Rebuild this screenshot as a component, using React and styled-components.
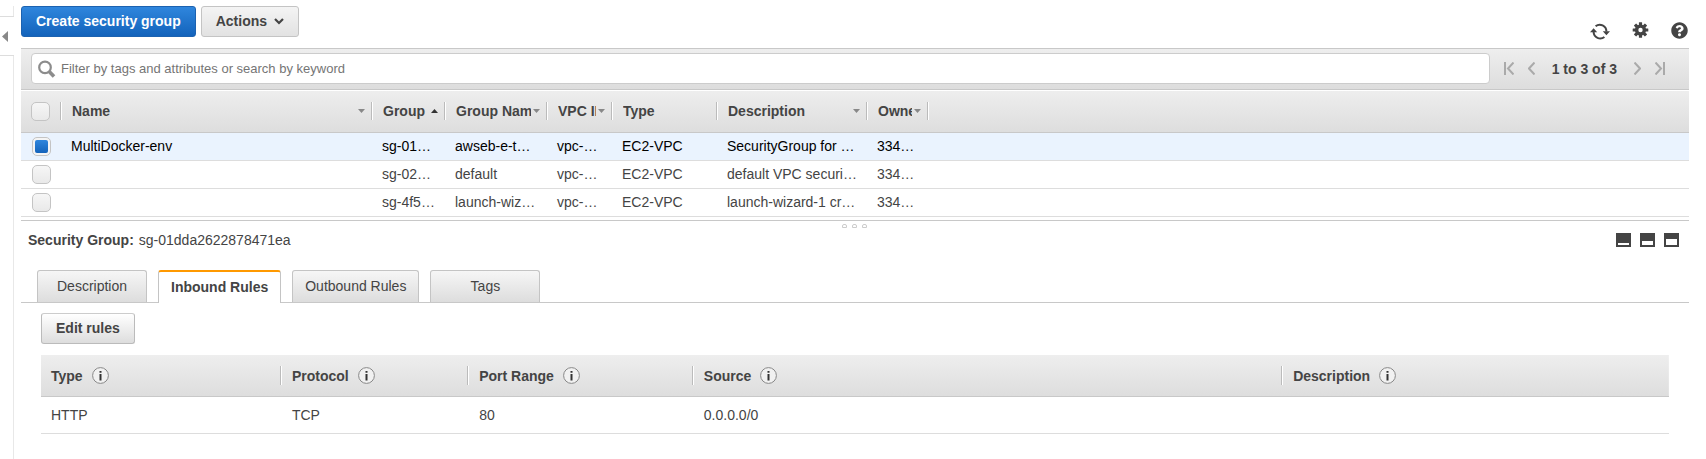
import React, { useState } from 'react';
import styled, { createGlobalStyle, css } from 'styled-components';
import { FaQuestionCircle } from 'react-icons/fa';

const GlobalStyle = createGlobalStyle`
  *, *::before, *::after { box-sizing: border-box; }
  body {
    margin: 0;
    background: #fff;
    color: #444;
    font: 14px/16px "Liberation Sans", Arial, sans-serif;
  }
  button, input { font: inherit; color: inherit; margin: 0; }
  svg { display: block; flex: none; }
`;

const Page = styled.div`
  display: flex;
  gap: 7px;
  min-height: 100vh;
  padding-right: 17px;
`;

const Rail = styled.aside`
  display: flex;
  flex-direction: column;
  flex: none;
  width: 14px;
  padding-top: 6px;
`;

const RailEdge = styled.div`
  border-right: 1px solid #e8e8e8;
  ${({ $grow }) => ($grow ? 'flex: 1;' : 'height: 10px;')}
`;

const RailToggle = styled.button`
  display: flex;
  align-items: center;
  height: 40px;
  padding: 0 0 0 2px;
  border: solid #ddd;
  border-width: 1px 0;
  background: #fff;
  cursor: pointer;
`;

const Main = styled.main`
  flex: 1;
  min-width: 0;
`;

const Toolbar = styled.div`
  display: flex;
  gap: 5px;
  padding: 6px 0 8px;
`;

const Button = styled.button`
  display: inline-flex;
  align-items: center;
  gap: 7px;
  height: 31px;
  padding: 0 14px 1px;
  border: 1px solid #bbb;
  border-top-color: #ccc;
  border-radius: 3px;
  background: linear-gradient(#fff, #ddd);
  font-weight: bold;
  white-space: nowrap;
  cursor: pointer;
  ${({ $kind }) => $kind === 'primary' && css`
    border-color: #1c62b0;
    background: linear-gradient(#2f86dd, #1363bb);
    color: #fff;
  `}
  ${({ $kind }) => $kind === 'menu' && css`
    border-color: #c4c4c4;
    background: linear-gradient(#f4f4f4, #e2e2e2);
  `}
`;

const ToolIcons = styled.div`
  display: flex;
  align-items: flex-start;
  align-self: flex-end;
  gap: 22px;
  height: 18px;
  margin: 16px 0 0 auto;
  padding-right: 1px;
`;

const IconButton = styled.button`
  display: flex;
  padding: 0;
  border: 0;
  background: none;
  cursor: pointer;
`;

const FilterBar = styled.div`
  display: flex;
  align-items: center;
  gap: 14px;
  padding: 4px 24px 5px 10px;
  border: solid #c8c8c8;
  border-width: 1px 0;
  background: linear-gradient(#eee, #ddd);
`;

const SearchBox = styled.label`
  display: flex;
  align-items: center;
  flex: 1;
  gap: 5px;
  height: 31px;
  padding: 0 6px;
  border: 1px solid #ccc;
  border-radius: 4px;
  background: #fff;
`;

const SearchInput = styled.input`
  flex: 1;
  min-width: 0;
  padding: 0;
  border: 0;
  outline: 0;
  background: none;
  font-size: 13px;
  &::placeholder { color: #757575; opacity: 1; }
`;

const Pager = styled.nav`
  display: flex;
  align-items: center;
  gap: 14px;
`;

const PagerText = styled.span`
  padding: 0 3px;
  font-weight: bold;
  white-space: nowrap;
`;

const Table = styled.table`
  width: 100%;
  table-layout: fixed;
  border-collapse: separate;
  border-spacing: 0;
  text-align: left;
`;

const Col = styled.col`
  width: ${({ $w }) => $w};
`;

const HeadRow = styled.tr`
  background: linear-gradient(#eee, #ddd);
`;

const GroupTh = styled.th`
  padding: 11px 0 12px;
  border-top: 1px solid #fff;
  border-bottom: 1px solid #c8c8c8;
`;

const RuleTh = styled.th`
  padding: 11px 0;
  border-bottom: 1px solid #c8c8c8;
`;

const HeadCell = styled.div`
  display: flex;
  align-items: center;
  gap: ${({ $gap }) => $gap};
  height: ${({ $tall }) => ($tall ? '19px' : '18px')};
  padding: 0 7px 0 10px;
  line-height: 18px;
  ${({ $last }) => !$last && css`
    border-right: 1px solid #fff;
    box-shadow: inset -1px 0 #bbb;
  `}
`;

const HeadLabel = styled.span`
  flex: 1;
  min-width: 0;
  overflow: hidden;
  white-space: nowrap;
`;

const GroupRow = styled.tr`
  color: ${({ $selected }) => ($selected ? '#000' : '#444')};
  background: ${({ $selected }) => ($selected ? '#eaf3fe' : '#fff')};
`;

const GroupTd = styled.td`
  height: 28px;
  padding: 5px 0 6px 9px;
  border-bottom: 1px solid #ddd;
  overflow: hidden;
  white-space: nowrap;
`;

const CheckTd = styled(GroupTd)`
  padding: 4px 0 4px 11px;
`;

const Checkbox = styled.input`
  appearance: none;
  display: block;
  flex: none;
  width: 19px;
  height: 19px;
  border: 1px solid #c4c4c4;
  border-radius: 5px;
  background: linear-gradient(#f6f6f6, #e9e9e9);
  &:checked {
    padding: 2px;
    background: linear-gradient(#2f86dd, #1363bb) content-box, #f4f4f4;
  }
`;

const Splitter = styled.div`
  display: flex;
  justify-content: center;
  gap: 5px;
  height: 12px;
  margin-top: 3px;
  padding: 3px 1px 0 0;
  border-top: 1px solid #c8c8c8;
  cursor: row-resize;
`;

const Grip = styled.span`
  width: 5px;
  height: 4px;
  border: 1px solid #ccc;
  border-radius: 2px 2px 0 0;
`;

const DetailHead = styled.div`
  display: flex;
  align-items: center;
  justify-content: space-between;
  padding: 0 10px 0 7px;
`;

const DetailTitle = styled.div`
  display: flex;
  gap: 5px;
`;

const PaneButtons = styled.div`
  display: flex;
  gap: 9px;
`;

const Tabs = styled.div`
  display: flex;
  align-items: flex-start;
  gap: 11px;
  margin-top: 22px;
  padding-left: 16px;
  border-bottom: 1px solid #c8c8c8;
`;

const Tab = styled.button`
  min-width: 110px;
  height: 32px;
  padding: 7px 12px 8px;
  border: 1px solid #c4c4c4;
  border-bottom: 0;
  border-radius: 3px 3px 0 0;
  background: linear-gradient(#f6f6f6, #ddd);
  line-height: 16px;
  cursor: pointer;
  ${({ $active }) => $active && css`
    height: 33px;
    margin-bottom: -1px;
    border-top: 2px solid #f90;
    background: #fff;
    font-weight: bold;
  `}
`;

const TabPanel = styled.section`
  display: flex;
  flex-direction: column;
  align-items: flex-start;
  gap: 11px;
  padding: 10px 20px 25px;
`;

const RuleTd = styled.td`
  padding: 10px 0 10px 10px;
  border-bottom: 1px solid #ddd;
`;

const RefreshIcon = () => (
  <svg width="20" height="18" viewBox="0 0 20 18">
    <path d="M5.6 4.3A6.6 6.6 0 0 1 16.4 9.4M14.4 14.9A6.6 6.6 0 0 1 3.6 10" fill="none" stroke="#444" strokeWidth="2" />
    <path d="M12.8 9.2H20L16.4 13.2ZM0 10.2H7.2L3.6 6.2Z" fill="#444" />
  </svg>
);

const GearIcon = () => (
  <svg width="17" height="17" viewBox="-8.5 -8 17 17">
    <g fill="#444">
      {[0, 45, 90, 135].map((a) => (
        <rect key={a} x="-1.6" y="-7.8" width="3.2" height="15.6" rx="0.4" transform={`rotate(${a})`} />
      ))}
      <circle r="5.6" />
    </g>
    <circle r="2.2" fill="#fff" />
  </svg>
);

const SearchIcon = () => (
  <svg width="18" height="18" viewBox="0 0 18 18" fill="none" stroke="#8c8c8c">
    <circle cx="7" cy="7.4" r="5.8" strokeWidth="2.2" />
    <path d="M11.4 11.8L16 16.6" strokeWidth="3.6" />
  </svg>
);

const CaretIcon = ({ up }) => (
  <svg width="7" height="4" viewBox="0 0 7 4">
    <path d={up ? 'M0 4H7L3.5 0Z' : 'M0 0H7L3.5 4Z'} fill={up ? '#333' : '#888'} />
  </svg>
);

const InfoIcon = () => (
  <svg width="17" height="17" viewBox="0 0 17 17">
    <circle cx="8.5" cy="8.5" r="7.9" fill="#f1f1f1" stroke="#888" />
    <path d="M7.5 4H9.5V5.8H7.5ZM7.5 7H9.5V13.5H7.5Z" fill="#333" />
  </svg>
);

const PAGER_PATHS = {
  first: { width: 10, d: 'M1 0V13M9.5 0.5L4 6.5L9.5 12.5' },
  previous: { width: 7, d: 'M6.5 0.5L1 6.5L6.5 12.5' },
  next: { width: 7, d: 'M0.5 0.5L6 6.5L0.5 12.5' },
  last: { width: 10, d: 'M9 0V13M0.5 0.5L6 6.5L0.5 12.5' },
};

const PagerButton = ({ to }) => (
  <IconButton aria-label={`${to} page`}>
    <svg width={PAGER_PATHS[to].width} height="13" fill="none" stroke="#aaa" strokeWidth="2">
      <path d={PAGER_PATHS[to].d} />
    </svg>
  </IconButton>
);

const PaneIcon = ({ fill }) => (
  <svg width="15" height="14">
    <path d="M0 0H15V14H0Z" fill="#444" />
    <rect x="2" y={12 - fill} width="11" height={fill} fill="#fff" />
  </svg>
);

const GROUP_COLUMNS = [
  { label: 'Name', width: '311px', sort: 'down' },
  { label: 'Group', width: '73px', sort: 'up' },
  { label: 'Group Name', width: '102px', sort: 'down' },
  { label: 'VPC ID', width: '65px', sort: 'down' },
  { label: 'Type', width: '105px' },
  { label: 'Description', width: '150px', sort: 'down' },
  { label: 'Owner', width: '61px', sort: 'down' },
];

const GROUPS = [
  ['MultiDocker-env', 'sg-01…', 'awseb-e-t…', 'vpc-…', 'EC2-VPC', 'SecurityGroup for …', '334…'],
  ['', 'sg-02…', 'default', 'vpc-…', 'EC2-VPC', 'default VPC securi…', '334…'],
  ['', 'sg-4f5…', 'launch-wiz…', 'vpc-…', 'EC2-VPC', 'launch-wizard-1 cr…', '334…'],
];

const RULE_COLUMNS = [
  { label: 'Type', width: '14.8%' },
  { label: 'Protocol', width: '11.5%' },
  { label: 'Port Range', width: '13.8%' },
  { label: 'Source', width: '36.2%' },
  { label: 'Description', width: 'auto' },
];

const RULE = ['HTTP', 'TCP', '80', '0.0.0.0/0', ''];
const TABS = ['Description', 'Inbound Rules', 'Outbound Rules', 'Tags'];

export default function App() {
  const [selected, setSelected] = useState(0);
  const [tab, setTab] = useState('Inbound Rules');

  return (
    <>
      <GlobalStyle />
      <Page>
        <Rail>
          <RailEdge />
          <RailToggle aria-label="Collapse navigation">
            <svg width="6" height="11"><path d="M6 0V11L0 5.5Z" fill="#888" /></svg>
          </RailToggle>
          <RailEdge $grow />
        </Rail>
        <Main>
          <Toolbar>
            <Button $kind="primary">Create security group</Button>
            <Button $kind="menu">
              Actions
              <svg width="10" height="7" viewBox="0 0 10 7">
                <path d="M1 1L5 5L9 1" fill="none" stroke="#444" strokeWidth="2.2" />
              </svg>
            </Button>
            <ToolIcons>
              <IconButton aria-label="Refresh"><RefreshIcon /></IconButton>
              <IconButton aria-label="Settings"><GearIcon /></IconButton>
              <IconButton aria-label="Help"><FaQuestionCircle size={17} color="#444" /></IconButton>
            </ToolIcons>
          </Toolbar>

          <FilterBar>
            <SearchBox>
              <SearchIcon />
              <SearchInput
                type="text"
                aria-label="Filter security groups"
                placeholder="Filter by tags and attributes or search by keyword"
              />
            </SearchBox>
            <Pager aria-label="Pages">
              <PagerButton to="first" />
              <PagerButton to="previous" />
              <PagerText>1 to 3 of 3</PagerText>
              <PagerButton to="next" />
              <PagerButton to="last" />
            </Pager>
          </FilterBar>

          <Table>
            <colgroup>
              <Col $w="41px" />
              {GROUP_COLUMNS.map((c) => <Col key={c.label} $w={c.width} />)}
              <Col $w="auto" />
            </colgroup>
            <thead>
              <HeadRow>
                <GroupTh>
                  <HeadCell $gap="2px">
                    <Checkbox type="checkbox" aria-label="Select all" />
                  </HeadCell>
                </GroupTh>
                {GROUP_COLUMNS.map((c) => (
                  <GroupTh key={c.label}>
                    <HeadCell $gap="2px">
                      <HeadLabel>{c.label}</HeadLabel>
                      {c.sort && <CaretIcon up={c.sort === 'up'} />}
                    </HeadCell>
                  </GroupTh>
                ))}
                <GroupTh />
              </HeadRow>
            </thead>
            <tbody>
              {GROUPS.map((cells, i) => (
                <GroupRow key={cells[1]} $selected={i === selected}>
                  <CheckTd>
                    <Checkbox
                      type="checkbox"
                      aria-label={`Select ${cells[1]}`}
                      checked={i === selected}
                      onChange={() => setSelected(i)}
                    />
                  </CheckTd>
                  {cells.map((text, n) => <GroupTd key={GROUP_COLUMNS[n].label}>{text}</GroupTd>)}
                  <GroupTd />
                </GroupRow>
              ))}
            </tbody>
          </Table>

          <Splitter><Grip /><Grip /><Grip /></Splitter>

          <DetailHead>
            <DetailTitle>
              <strong>Security Group:</strong>
              <span>sg-01dda2622878471ea</span>
            </DetailTitle>
            <PaneButtons>
              <IconButton aria-label="Small details pane"><PaneIcon fill={2} /></IconButton>
              <IconButton aria-label="Medium details pane"><PaneIcon fill={4} /></IconButton>
              <IconButton aria-label="Large details pane"><PaneIcon fill={6} /></IconButton>
            </PaneButtons>
          </DetailHead>

          <Tabs role="tablist">
            {TABS.map((name) => (
              <Tab key={name} role="tab" aria-selected={name === tab} $active={name === tab} onClick={() => setTab(name)}>
                {name}
              </Tab>
            ))}
          </Tabs>

          <TabPanel role="tabpanel">
            <Button>Edit rules</Button>
            <Table>
              <colgroup>
                {RULE_COLUMNS.map((c) => <Col key={c.label} $w={c.width} />)}
              </colgroup>
              <thead>
                <HeadRow>
                  {RULE_COLUMNS.map((c, i) => (
                    <RuleTh key={c.label}>
                      <HeadCell $tall $gap="9px" $last={i === RULE_COLUMNS.length - 1}>
                        {c.label}
                        <InfoIcon />
                      </HeadCell>
                    </RuleTh>
                  ))}
                </HeadRow>
              </thead>
              <tbody>
                <tr>
                  {RULE.map((text, i) => <RuleTd key={RULE_COLUMNS[i].label}>{text}</RuleTd>)}
                </tr>
              </tbody>
            </Table>
          </TabPanel>
        </Main>
      </Page>
    </>
  );
}
